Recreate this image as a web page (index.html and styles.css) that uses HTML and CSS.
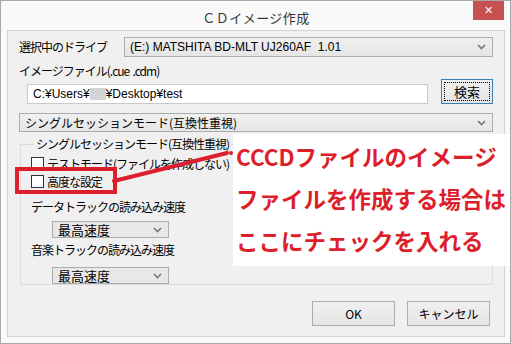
FILE: index.html
```html
<!DOCTYPE html>
<html lang="ja">
<head>
  <meta charset="UTF-8">
  <title>ＣＤイメージ作成</title>
  <link rel="stylesheet" href="styles.css">
</head>
<body>

  <div class="window">
    <div class="titlebar">
      <span></span>
      <span class="title">ＣＤイメージ作成</span>
      <button class="close-btn">&#x2715;</button>
    </div>

    <div class="client">
      <div class="row drive-row">
        <span class="label drive-label">選択中のドライブ</span>
        <div class="combo drive-combo">
          <span>(E:) MATSHITA BD-MLT UJ260AF&nbsp; 1.01</span>
          <svg class="chev" width="9" height="6" viewBox="0 0 9 6"><path d="M1 1 L4.5 4.5 L8 1" fill="none" stroke="#777" stroke-width="1.6"/></svg>
        </div>
      </div>

      <div class="label file-label">イメージファイル(.cue&nbsp; .cdm)</div>
      <div class="row file-row">
        <div class="textbox">C:¥Users¥<span class="blur"></span>¥Desktop¥test</div>
        <button class="btn search-btn"><span>検索</span></button>
      </div>

      <div class="combo mode-combo">
        <span>シングルセッションモード(互換性重視)</span>
        <svg class="chev" width="9" height="6" viewBox="0 0 9 6"><path d="M1 1 L4.5 4.5 L8 1" fill="none" stroke="#777" stroke-width="1.6"/></svg>
      </div>

      <fieldset class="group">
        <legend>シングルセッションモード(互換性重視)</legend>
        <label class="check"><span class="box"></span>テストモード(ファイルを作成しない)</label>
        <label class="check"><span class="box"></span>高度な設定</label>
        <div class="label speed-label data-label">データトラックの読み込み速度</div>
        <div class="combo speed-combo">
          <span>最高速度</span>
          <svg class="chev" width="9" height="6" viewBox="0 0 9 6"><path d="M1 1 L4.5 4.5 L8 1" fill="none" stroke="#777" stroke-width="1.6"/></svg>
        </div>
        <div class="label speed-label music-label">音楽トラックの読み込み速度</div>
        <div class="combo speed-combo music-combo">
          <span>最高速度</span>
          <svg class="chev" width="9" height="6" viewBox="0 0 9 6"><path d="M1 1 L4.5 4.5 L8 1" fill="none" stroke="#777" stroke-width="1.6"/></svg>
        </div>
      </fieldset>

      <div class="footer">
        <button class="btn footer-btn">OK</button>
        <button class="btn footer-btn">キャンセル</button>
      </div>
    </div>

    <!-- annotation laid over the dialog -->
    <div class="mark-box"></div>
    <svg class="mark-line" width="130" height="40" viewBox="0 0 130 40">
      <line x1="4" y1="34" x2="117" y2="6" stroke="#dc1f2b" stroke-width="4" stroke-linecap="round"/>
      <circle cx="121" cy="6" r="2" fill="#dc1f2b"/>
    </svg>
    <div class="note">
      <p>CCCDファイルのイメージ</p>
      <p>ファイルを作成する場合は</p>
      <p>ここにチェックを入れる</p>
    </div>
  </div>

</body>
</html>
```

FILE: styles.css
```css
body {
  margin: 0;
  padding: 0;
  background: #ffffff;
  font-family: "Noto Sans CJK JP", "Liberation Sans", sans-serif;
}

.window {
  position: relative;
  width: 511px;
  height: 344px;
  box-sizing: border-box;
  border: 1px solid #a8a8a8;
  background: #f9f9f9;
  padding: 0 5px 6px 6px;
  overflow: hidden;
}

.titlebar {
  height: 29px;
  display: grid;
  grid-template-columns: 1fr auto 1fr;
}

.title {
  font-size: 13px;
  color: #333;
  letter-spacing: 0.5px;
  line-height: 33px;
}

.close-btn {
  justify-self: end;
  width: 31px;
  height: 20px;
  margin: -1px 1px 0 0;
  border: none;
  background: #c75050;
  color: #fff;
  font-size: 11px;
  font-weight: bold;
  padding: 0;
  font-family: "DejaVu Sans", sans-serif;
}

.client {
  height: 307px;
  box-sizing: border-box;
  border: 1px solid #d2d2d2;
  background: #f0f0f0;
  padding: 6px 11px 0 11px;
  font-size: 12px;
  color: #000;
}

.row {
  display: flex;
  align-items: flex-end;
}

.label {
  font-size: 12px;
  letter-spacing: -1px;
  white-space: nowrap;
}

.drive-label {
  width: 105px;
  line-height: 20px;
}

.combo {
  display: flex;
  align-items: center;
  justify-content: space-between;
  box-sizing: border-box;
  border: 1px solid #acacac;
  background: linear-gradient(#f0f0f0, #e5e5e5);
  padding: 0 6px 0 5px;
  font-size: 12px;
}

.drive-combo {
  flex: 1;
  height: 20px;
  font-family: "Liberation Sans", sans-serif;
  font-size: 12px;
}

.file-label {
  margin-top: 6px;
  line-height: 16px;
}

.file-row {
  justify-content: space-between;
}

.textbox {
  margin-left: 8px;
  width: 401px;
  height: 20px;
  box-sizing: border-box;
  border: 1px solid #c9c9c9;
  background: #fff;
  padding: 0 5px;
  line-height: 18px;
  font-family: "Liberation Sans", sans-serif;
  font-size: 12px;
}

.blur {
  display: inline-block;
  width: 16px;
  height: 12px;
  vertical-align: -2px;
  background: #d4d4d4;
}

.btn {
  box-sizing: border-box;
  border: 1px solid #acacac;
  background: linear-gradient(#f0f0f0, #e5e5e5);
  font-family: "Noto Sans CJK JP", sans-serif;
  font-size: 12px;
  color: #000;
  padding: 0;
}

.search-btn {
  width: 52px;
  height: 25px;
  border-color: #3c7fb1;
  padding: 2px;
}

.search-btn span {
  display: block;
  height: 100%;
  border: 1px dotted #000;
  box-sizing: border-box;
  line-height: 18px;
  font-size: 13px;
}

.mode-combo {
  margin-top: 9px;
  height: 19px;
}

.group {
  margin: 5px 0 0 1px;
  height: 148px;
  box-sizing: border-box;
  border: 1px solid #dcdcdc;
  padding: 0 0 0 9px;
}

.group legend {
  padding: 0 2px;
  margin-left: 4px;
  letter-spacing: -1px;
  line-height: 14px;
}

.check {
  display: flex;
  align-items: center;
  gap: 3px;
  height: 18px;
  letter-spacing: -1px;
  margin-left: 1px;
}

.check:first-of-type {
  margin-top: 3px;
}

.box {
  width: 13px;
  height: 13px;
  box-sizing: border-box;
  border: 1px solid #333;
  background: #fff;
}

.speed-label {
  line-height: 16px;
  margin-left: 1px;
}

.data-label {
  margin-top: 9px;
}

.music-label {
  margin-top: 4px;
}

.speed-combo {
  width: 117px;
  height: 17px;
  margin: 6px 0 0 22px;
  background: #e8e8e8;
  font-size: 13px;
}

.music-combo {
  margin-top: 9px;
}

.footer {
  display: flex;
  justify-content: flex-end;
  gap: 12px;
  margin-top: 16px;
  padding-right: 3px;
}

.footer-btn {
  width: 83px;
  height: 25px;
}

.mark-box {
  position: absolute;
  left: 14px;
  top: 166px;
  width: 102px;
  height: 27px;
  box-sizing: border-box;
  border: 4px solid #dc1f2b;
}

.mark-line {
  position: absolute;
  left: 109px;
  top: 146px;
}

.note {
  position: absolute;
  left: 232px;
  top: 133px;
  width: 279px;
  height: 132px;
  background: #fff;
  box-sizing: border-box;
  padding: 1px 0 0 3px;
  color: #dc1f2b;
  font-weight: bold;
  font-size: 22.5px;
}

.note p {
  margin: 0;
  line-height: 42px;
  white-space: nowrap;
}
```
